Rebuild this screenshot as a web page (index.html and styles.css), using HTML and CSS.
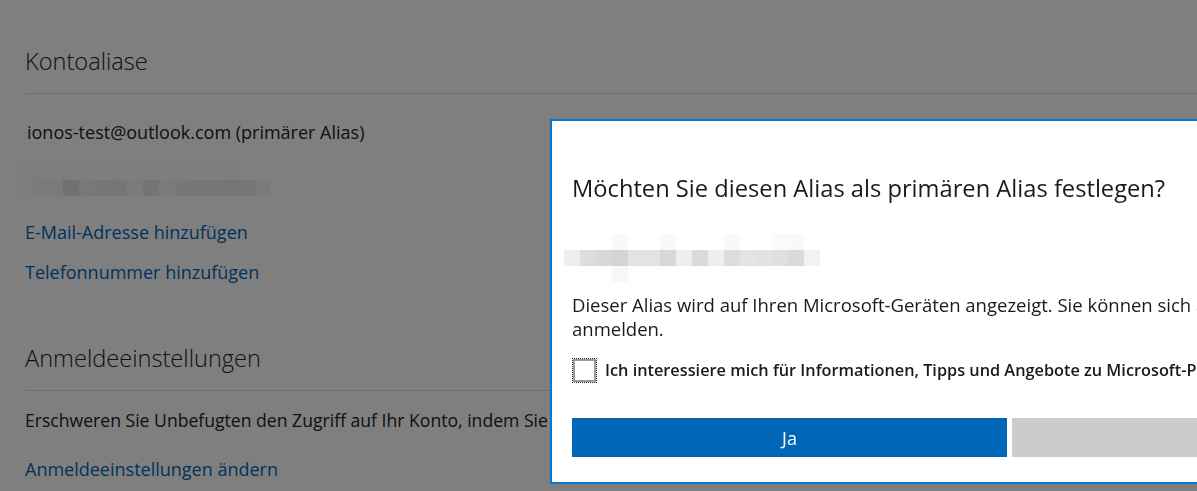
FILE: index.html
```html
<!DOCTYPE html>
<html lang="de">
<head>
<meta charset="utf-8">
<title>Kontoaliase</title>
<link rel="stylesheet" href="styles.css">
</head>
<body>
<main class="page">
  <section class="section">
    <h2 class="section-title">Kontoaliase</h2>
    <p class="alias">ionos-test@outlook.com (primärer Alias)</p>
    <div class="blur blur-page">
      <div class="blur-row faint">
        <span class="c" style="background:#fdfdfd"></span><span class="c" style="background:#fbfbfb"></span><span class="c" style="background:#fcfcfc"></span><span class="c" style="background:#fbfbfb"></span><span class="c" style="background:#fdfdfd"></span><span class="c" style="background:#fcfcfc"></span><span class="c" style="background:#fbfbfb"></span><span class="c" style="background:#fcfcfc"></span><span class="c" style="background:#fbfbfb"></span><span class="c" style="background:#fcfcfc"></span><span class="c" style="background:#fbfbfb"></span><span class="c" style="background:#fcfcfc"></span><span class="c" style="background:#fdfdfd"></span><span class="c" style="background:#fcfcfc"></span><span class="c" style="background:#fefefe"></span>
      </div>
      <div class="blur-row main">
        <span class="c" style="background:#fcfcfc"></span><span class="c" style="background:#f4f6f4"></span><span class="c" style="background:#f4f4f4"></span><span class="c" style="background:#e2e2e2"></span><span class="c" style="background:#f0f0f0"></span><span class="c" style="background:#eeecec"></span><span class="c" style="background:#ececec"></span><span class="c" style="background:#f6f6f6"></span><span class="c" style="background:#e8e8e8"></span><span class="c" style="background:#f4f6f4"></span><span class="c" style="background:#eeeeec"></span><span class="c" style="background:#ececea"></span><span class="c" style="background:#ececec"></span><span class="c" style="background:#eaeaea"></span><span class="c" style="background:#ececec"></span><span class="c" style="background:#f4f4f4"></span>
      </div>
    </div>
    <a class="link link-first" href="#">E-Mail-Adresse hinzufügen</a>
    <a class="link link-next" href="#">Telefonnummer hinzufügen</a>
  </section>
  <section class="section section-second">
    <h2 class="section-title">Anmeldeeinstellungen</h2>
    <p class="desc">Erschweren Sie Unbefugten den Zugriff auf Ihr Konto, indem Sie die Anmeldeeinstellungen anpassen.</p>
    <a class="link link-last" href="#">Anmeldeeinstellungen ändern</a>
  </section>
</main>

<div class="overlay"></div>

<div class="dialog" role="dialog" aria-labelledby="dlg-title">
  <h1 class="dialog-title" id="dlg-title">Möchten Sie diesen Alias als primären Alias festlegen?</h1>
  <div class="blur blur-dialog">
    <div class="blur-row faint">
      <span class="c"></span><span class="c"></span><span class="c"></span><span class="c" style="background:#f9f9f9"></span><span class="c"></span><span class="c"></span><span class="c" style="background:#f9f9f9"></span><span class="c"></span><span class="c"></span><span class="c"></span><span class="c" style="background:#f9f9f9"></span><span class="c"></span><span class="c"></span><span class="c" style="background:#fafafa"></span><span class="c" style="background:#f9f9f9"></span><span class="c"></span>
    </div>
    <div class="blur-row main">
      <span class="c" style="background:#efeeec"></span><span class="c" style="background:#dcdde0"></span><span class="c" style="background:#d8d8d8"></span><span class="c" style="background:#d4d4d4"></span><span class="c" style="background:#e3e3e3"></span><span class="c" style="background:#e2e4e4"></span><span class="c" style="background:#d8d8d8"></span><span class="c" style="background:#efefef"></span><span class="c" style="background:#dadada"></span><span class="c" style="background:#efefef"></span><span class="c" style="background:#dcdde0"></span><span class="c" style="background:#e3e5e5"></span><span class="c" style="background:#e4e2e0"></span><span class="c" style="background:#dee0e3"></span><span class="c" style="background:#dadada"></span><span class="c" style="background:#f1f2f4"></span>
    </div>
    <div class="blur-row faint">
      <span class="c"></span><span class="c"></span><span class="c"></span><span class="c" style="background:#f8f8f8"></span><span class="c"></span><span class="c"></span><span class="c"></span><span class="c"></span><span class="c"></span><span class="c"></span><span class="c"></span><span class="c"></span><span class="c"></span><span class="c"></span><span class="c"></span><span class="c"></span>
    </div>
  </div>
  <p class="dialog-text">Dieser Alias wird auf Ihren Microsoft-Geräten angezeigt. Sie können sich auch mit diesem Alias bei Ihrem Konto<br>anmelden.</p>
  <label class="check">
    <span class="check-box"></span>
    <span class="check-label">Ich interessiere mich für Informationen, Tipps und Angebote zu Microsoft-Produkten und -Diensten.</span>
  </label>
  <div class="actions">
    <button class="btn btn-primary" type="button">Ja</button>
    <button class="btn btn-secondary" type="button">Nein</button>
  </div>
</div>
</body>
</html>
```

FILE: styles.css
```css
html, body {
  margin: 0;
  padding: 0;
  height: 100%;
  overflow: hidden;
  background: #ffffff;
}

body {
  font-family: "Open Sans", "Noto Sans", "Liberation Sans", sans-serif;
  font-size: 18px;
  color: #222222;
}

.page {
  padding: 45px 0 0 25px;
}

.section-title {
  margin: 0;
  font-size: 23.6px;
  font-weight: 300;
  line-height: 32px;
  color: #222222;
  padding-bottom: 16px;
  border-bottom: 1px solid #dddddd;
}

.alias {
  margin: 26px 0 0 2px;
  line-height: 24px;
  white-space: nowrap;
}

.blur {
  display: flex;
  flex-direction: column;
}

.blur-row {
  display: flex;
}

.c {
  display: block;
  width: 16px;
  height: 16px;
  background: transparent;
}

.blur-page {
  margin: 19px 0 0 -10px;
}

.blur-page .faint {
  height: 17px;
}

.blur-page .faint .c {
  height: 17px;
}

.link {
  display: block;
  width: max-content;
  line-height: 24px;
  color: #0067b8;
  text-decoration: none;
}

.link-first {
  margin-top: 24px;
}

.link-next {
  margin-top: 16px;
}

.section-second {
  margin-top: 58px;
}

.desc {
  margin: 17px 0 0;
  font-size: 17.6px;
  line-height: 24px;
  white-space: nowrap;
}

.link-last {
  margin-top: 25px;
}

.overlay {
  position: fixed;
  inset: 0;
  background: rgba(0, 0, 0, 0.5);
}

.dialog {
  position: absolute;
  top: 119px;
  left: 550px;
  width: 924px;
  height: 365px;
  box-sizing: border-box;
  border: 2px solid #0078d7;
  background: #ffffff;
  padding: 51px 20px 0;
  color: #1a1a1a;
}

.dialog-title {
  margin: 0;
  font-size: 23.7px;
  font-weight: 400;
  line-height: 32px;
  white-space: nowrap;
}

.blur-dialog {
  margin: 30px 0 0 -8px;
}

.dialog-text {
  margin: 11px 0 0;
  font-size: 18.5px;
  line-height: 24px;
  white-space: nowrap;
}

.check {
  display: flex;
  align-items: center;
  gap: 9px;
  margin-top: 16px;
  height: 26px;
}

.check-box {
  flex: none;
  width: 19px;
  height: 19px;
  margin-left: 1px;
  border: 2px solid #9a9aa0;
  outline: 1px dotted #222222;
  background: #ffffff;
}

.check-label {
  font-size: 16.3px;
  font-weight: 600;
  white-space: nowrap;
}

.actions {
  display: grid;
  grid-template-columns: 435px 435px;
  gap: 5px;
  margin-top: 35px;
}

.btn {
  height: 39px;
  border: 0;
  margin: 0;
  padding: 0;
  font-family: inherit;
  font-size: 18px;
}

.btn-primary {
  background: #0067b8;
  color: #ffffff;
}

.btn-secondary {
  background: #cccccc;
  color: #000000;
}
```
